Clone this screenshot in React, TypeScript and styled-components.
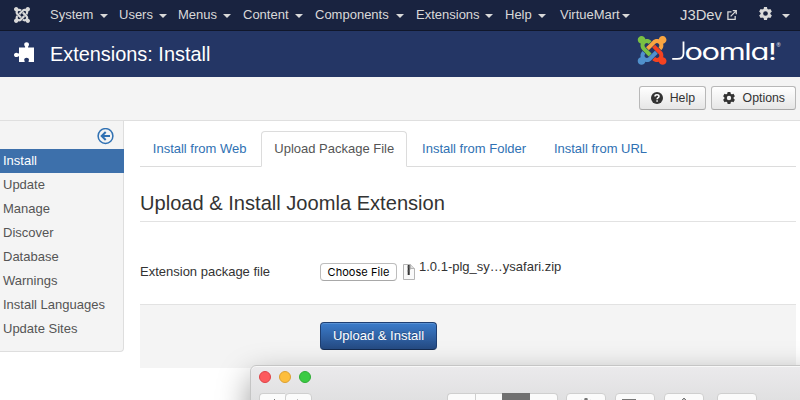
import React from "react";
import styled, { createGlobalStyle, css } from "styled-components";

const Global = createGlobalStyle`
  * { box-sizing: border-box; }
  html, body { margin: 0; width: 800px; height: 400px; overflow: hidden; background: #fff; }
  body { font: 13px/18px "Liberation Sans", Arial, sans-serif; color: #333; }
  svg { display: block; flex: none; }
`;

const Page = styled.div`
  position: relative;
  width: 800px;
  height: 400px;
  overflow: hidden;
`;

const NavBar = styled.nav`
  display: flex;
  align-items: center;
  height: 31px;
  padding: 0 10px 1px 14px;
  background: #192340;
  border-bottom: 1px solid #10172b;
  color: #d9d9d9;
`;

const NavMenu = styled.div`
  display: flex;
  margin-left: 20px;
  flex: 1;
`;

const NavItem = styled.span<{ $w: number; $textWidth: number }>`
  display: flex;
  align-items: center;
  width: ${(p) => p.$w}px;
  white-space: nowrap;
  span { width: ${(p) => p.$textWidth}px; }
`;

const Caret = styled.i`
  width: 0;
  height: 0;
  margin-top: 2px;
  border: 4px solid transparent;
  border-top-color: #d9d9d9;
  border-bottom: 0;
`;

const SiteLink = styled.span`
  display: flex;
  align-items: center;
  gap: 5px;
  margin-right: 22px;
  font-size: 14.8px;
`;

const UserMenu = styled.span`
  display: flex;
  align-items: center;
  gap: 10px;
  svg { margin-top: -3px; }
`;

const Header = styled.header`
  display: flex;
  align-items: flex-start;
  height: 46px;
  padding: 5px 18px 0 14px;
  background: #243665;
  color: #fff;
`;

const IconSlot = styled.span`
  padding-top: 6px;
`;

const PageTitle = styled.h1`
  flex: 1;
  margin: 0 0 0 16px;
  font-size: 19.9px;
  line-height: 36px;
  font-weight: 400;
`;

const Toolbar = styled.div`
  display: flex;
  justify-content: flex-end;
  gap: 5px;
  height: 44px;
  padding: 9px 4px 0;
  background: #f4f4f4;
  border-bottom: 1px solid #dfdfdf;
`;

const ToolButton = styled.button<{ $w: number }>`
  display: flex;
  align-items: center;
  justify-content: space-between;
  width: ${(p) => p.$w}px;
  height: 24px;
  padding: 0 10px 0 11px;
  border: 1px solid #b8b8b8;
  border-bottom-color: #a8a8a8;
  border-radius: 3px;
  background: linear-gradient(#fff, #e6e6e6);
  color: #333;
  font: 12.3px "Liberation Sans", Arial, sans-serif;
  svg { margin-top: -1px; }
`;

const Body = styled.div`
  display: flex;
  align-items: flex-start;
`;

const Sidebar = styled.aside`
  width: 124px;
  height: 231px;
  background: #f4f4f4;
  border: solid #dedede;
  border-width: 0 1px 1px 0;
  border-radius: 0 0 4px 0;
`;

const Collapse = styled.div`
  display: flex;
  justify-content: flex-end;
  height: 28px;
  padding: 7px 9px 0 0;
`;

const SideItem = styled.div<{ $active?: boolean }>`
  height: 24px;
  padding-left: 3px;
  line-height: 23px;
  color: #555;
  ${(p) => p.$active && css`
    margin-right: -1px;
    background: #3d70ab;
    color: #fff;
  `}
`;

const Main = styled.main`
  width: 656px;
  margin-left: 16px;
`;

const Tabs = styled.div`
  display: flex;
  height: 46px;
  padding-top: 10px;
  border-bottom: 1px solid #dcdcdc;
`;

const Tab = styled.a<{ $active?: boolean }>`
  height: 36px;
  padding: 0 12px 0 11.8px;
  margin-right: 2px;
  line-height: 34px;
  border: 1px solid transparent;
  color: #3071b3;
  white-space: nowrap;
  ${(p) => p.$active && css`
    border-color: #dcdcdc #dcdcdc #fff;
    border-radius: 4px 4px 0 0;
    background: #fff;
    color: #555;
  `}
`;

const Legend = styled.h2`
  height: 55px;
  margin: 0;
  padding-top: 18px;
  border-bottom: 1px solid #e2e2e2;
  font-size: 20.1px;
  line-height: 37px;
  font-weight: 400;
`;

const FieldRow = styled.div`
  display: flex;
  height: 82px;
  padding-top: 41px;
`;

const FieldLabel = styled.label`
  width: 180px;
  line-height: 18px;
`;

const ChooseFile = styled.button`
  width: 77px;
  height: 18px;
  padding: 0;
  border: 1px solid #bdbdbd;
  border-bottom-color: #a8a8a8;
  border-radius: 4px;
  background: #fff;
  color: #000;
  font: 11px/15px Inter, sans-serif;
  letter-spacing: 0.05px;
`;

const FileIcon = styled.svg`
  margin: 1px 4px 0 6px;
`;

const FileName = styled.span`
  margin-top: -5px;
`;

const Actions = styled.div`
  height: 64px;
  padding: 17px 0 0 180px;
  background: #f4f4f4;
  border-top: 1px solid #e2e2e2;
`;

const Primary = styled.button`
  display: block;
  width: 117px;
  height: 28px;
  padding: 0;
  border: 1px solid #1e3f72;
  border-bottom-color: #142b50;
  border-radius: 4px;
  background: linear-gradient(#3b7ccb, #254a82);
  box-shadow: inset 0 1px 0 #5890d2;
  color: #fff;
  font: 13px/26px "Liberation Sans", Arial, sans-serif;
  text-shadow: 0 -1px 0 #0004;
`;

const FinderWindow = styled.section`
  position: absolute;
  left: 250px;
  top: 365px;
  width: 640px;
  height: 160px;
  border: 1px solid #c5c5c5;
  border-radius: 6px 0 0 0;
  background: linear-gradient(#ebeaec, #dfdfe0 38px);
  box-shadow: inset 0 1px 0 #f8f8f8, 0 12px 32px #0006;
`;

const Lights = styled.div`
  display: flex;
  gap: 8px;
  padding: 5px 0 0 8px;
`;

const Light = styled.i<{ $fill: string; $edge: string }>`
  width: 12px;
  height: 12px;
  border: 1px solid ${(p) => p.$edge};
  border-radius: 50%;
  background: ${(p) => p.$fill};
`;

const FinderTools = styled.div`
  display: flex;
  padding: 10px 0 0 8px;
`;

const Segment = styled.div<{ $w: number; $gap?: number; $dark?: boolean; $shape?: "first" | "mid" | "last" }>`
  display: flex;
  justify-content: center;
  width: ${(p) => p.$w}px;
  height: 22px;
  margin-right: ${(p) => p.$gap ?? 0}px;
  padding-top: 4px;
  border: 1px solid #cfcfcf;
  border-radius: 4px;
  background: #fbfbfb;
  ${(p) => p.$shape === "first" && css`border-radius: 4px 0 0 4px; border-right-width: 0;`}
  ${(p) => p.$shape === "mid" && css`border-radius: 0; border-right-width: 0;`}
  ${(p) => p.$shape === "last" && css`border-radius: 0 4px 4px 0; border-left: 0;`}
  ${(p) => p.$dark && css`background: #707070; border-color: #707070;`}
`;

const Wordmark = styled.text`
  fill: #fff;
  font-family: Inter, sans-serif;
  font-size: 22.5px;
  font-weight: 400;
  letter-spacing: -1px;
  font-feature-settings: "cv11" 1;
`;

const strands = [
  { color: "#7ac143", d: "M.6 92.1C.6 58.8 27.4 32 60.4 32c30 0 54.5 21.9 59.2 50.2 32.6-7.6 67.1.6 96.5 30l-44.3 44.3c-20.5-20.5-42.6-16.3-55.4-3.5-14.3 14.3-14.3 37.9 0 52.2l99.5 99.5-44 44.3c-87.7-87.2-49.7-49.7-99.8-99.7-26.8-26.5-35-64.8-24.8-98.9C20.4 144.6.6 120.7.6 92.1z" },
  { color: "#f9a541", d: "M130.1 208.5l44.3 44.3c10-10 89.7-89.7 99.7-99.8 14.3-14.3 37.6-14.3 51.9 0 12.8 12.8 17 35-3.5 55.4l44 44.3c31.2-31.2 38.5-67.6 28.9-101.2 29.2-4.1 51.9-29.2 51.9-59.5 0-33.2-26.8-60.1-59.8-60.1-30.3 0-55.4 22.5-59.5 51.6-33.8-9.9-71.7-1.5-98.3 25.1-18.3 19.1-71.1 71.5-99.6 99.9z" },
  { color: "#f44321", d: "M396.4 360.7c8.2-32.7-.9-68.5-26.3-93.9-11.8-12.2 5 4.7-99.5-99.7l-44.3 44.3 99.7 99.7c14.3 14.3 14.3 37.6 0 51.9-12.8 12.8-35 17-55.4-3.5l-44 44.3c27.6 30.2 68 38.8 102.7 28 5.5 27.4 29.7 48.1 58.9 48.1 33 0 59.8-26.8 59.8-60.1 0-30.2-22.5-55-51.6-59.1z" },
  { color: "#5091cd", d: "M312.1 307.6l-44-44.3c-87 86.4-50.4 50.4-99.7 99.8-14.3 14.3-37.6 14.3-51.9 0-13.1-13.4-16.9-35.3 3.2-55.4l-44-44.3c-30.2 30.2-38 65.2-29.5 98.3-26.7 6-46.2 29.9-46.2 58.2C0 453.2 26.8 480 59.8 480c28.6 0 52.5-19.8 58.6-46.7 32.7 8.2 68.5-.6 94.2-26 32.1-32 12.2-12.4 99.5-99.7z" },
];

const Strands = ({ mono }: { mono?: string }) => (
  <>{strands.map((s) => <path key={s.color} d={s.d} fill={mono ?? s.color} />)}</>
);

const JoomlaMark = () => (
  <svg width="16" height="16" viewBox="0 32 448 448"><Strands mono="#d9d9d9" /></svg>
);

const Gear = ({ size, color }: { size: number; color: string }) => (
  <svg width={size} height={size} viewBox="0 0 14 14">
    <g fill={color}>
      {[0, 60, 120].map((a) => (
        <path key={a} d="M5.4 0h3.200l.6 3H4.800zM5.400 14h3.200l.6-3H4.800z" transform={`rotate(${a} 7 7)`} />
      ))}
    </g>
    <circle cx="7" cy="7" r="3.900" fill="none" stroke={color} strokeWidth="2.700" />
  </svg>
);

const Puzzle = () => (
  <svg width="20" height="21" viewBox="0 0 20 21" fill="#fff">
    <path d="M5 5.500h5.700c.5 0 .6-.5.3-1-.5-.6-.8-1.200-.8-2C10.200 1.100 11.200.3 12.600.3S15 1.100 15 2.500c0 .8-.3 1.400-.8 2-.3.500-.2 1 .3 1H20V20h-5c-.6 0-.7-.4-.4-.9.300-.5.4-.9.4-1.300 0-1.300-1.100-2.100-2.400-2.100s-2.400.8-2.400 2.100c0 .4.1.8.4 1.300.300.500.2.9-.4.9H5v-5.200c0-.5-.4-.6-.9-.3-.6.400-1.100.6-1.700.6C.900 15.100 0 14.200 0 13s.9-2.200 2.400-2.200c.6 0 1.100.2 1.700.6.500.300.9.200.9-.3z" />
  </svg>
);

const JoomlaLogo = () => (
  <svg width="145" height="36" viewBox="0 0 145 36">
    <g transform="translate(0.700 0) scale(.0643)"><g transform="translate(0 -32)"><Strands /></g></g>
    <path d="M46.500 5.500V17.500c0 4-2.100 5.400-6.300 5.400h-5" fill="none" stroke="#fff" strokeWidth="1.800" />
    <Wordmark transform="translate(47.500 23.700) scale(1.420 1)" textLength="64" lengthAdjust="spacingAndGlyphs">oomla!</Wordmark>
    <text x="139.500" y="10.500" fill="#fff" fontFamily="Liberation Sans, sans-serif" fontSize="5.500">®</text>
  </svg>
);

const menu: [string, number, number][] = [
  ["System", 69, 49.5], ["Users", 59, 40], ["Menus", 65, 45], ["Content", 72, 52],
  ["Components", 101, 81], ["Extensions", 89, 69], ["Help", 55, 33], ["VirtueMart", 80, 62],
];
const side = ["Install", "Update", "Manage", "Discover", "Database", "Warnings", "Install Languages", "Update Sites"];
const tabs = ["Install from Web", "Upload Package File", "Install from Folder", "Install from URL"];

export default function App() {
  return (
    <Page>
      <Global />
      <NavBar>
        <JoomlaMark />
        <NavMenu>
          {menu.map(([t, w, tw]) => (
            <NavItem key={t} $w={w} $textWidth={tw}><span>{t}</span><Caret /></NavItem>
          ))}
        </NavMenu>
        <SiteLink>
          J3Dev
          <svg width="10" height="10" viewBox="0 0 11 11" fill="none" stroke="#d9d9d9" strokeWidth="1.400">
            <path d="M5 2H1v8.200h8V6.500M4 7l5.500-5.500M6.300.8H10.200V4.700" />
          </svg>
        </SiteLink>
        <UserMenu><Gear size={13} color="#d9d9d9" /><Caret /></UserMenu>
      </NavBar>
      <Header>
        <IconSlot><Puzzle /></IconSlot>
        <PageTitle>Extensions: Install</PageTitle>
        <JoomlaLogo />
      </Header>
      <Toolbar>
        <ToolButton $w={67}>
          <svg width="12" height="12" viewBox="0 0 12 12">
            <circle cx="6" cy="6" r="6" fill="#333" />
            <path d="M4 4.500C4 2.300 8 2.300 8 4.500 8 5.800 6.100 5.600 6.100 7.200M6.100 8.200v1.500" fill="none" stroke="#fff" strokeWidth="1.500" />
          </svg>
          Help
        </ToolButton>
        <ToolButton $w={85}><Gear size={12} color="#333" />Options</ToolButton>
      </Toolbar>
      <Body>
        <Sidebar>
          <Collapse>
            <svg width="17" height="17" viewBox="0 0 17 17" fill="none" stroke="#3071b3">
              <circle cx="8.500" cy="8" r="7.400" strokeWidth="1.500" />
              <path d="M13 8H5M8.700 4l-4 4 4 4" strokeWidth="2" />
            </svg>
          </Collapse>
          {side.map((t, i) => <SideItem key={t} $active={i === 0}>{t}</SideItem>)}
        </Sidebar>
        <Main>
          <Tabs>{tabs.map((t, i) => <Tab key={t} $active={i === 1}>{t}</Tab>)}</Tabs>
          <Legend>Upload &amp; Install Joomla Extension</Legend>
          <FieldRow>
            <FieldLabel>Extension package file</FieldLabel>
            <ChooseFile>Choose File</ChooseFile>
            <FileIcon width="12" height="17" viewBox="0 0 12 17">
              <path d="M.5.5h7l4 4v11H.5z" fill="#fafafa" stroke="#b5b5b5" />
              <path d="M7.500.5v4h4" fill="#ddd" stroke="#b5b5b5" />
              <path d="M5.700 1v10" stroke="#333" strokeWidth="2" />
              <path d="M4.500 3h1M6 5h1.500M4.500 7h1" stroke="#777" />
            </FileIcon>
            <FileName>1.0.1-plg_sy…ysafari.zip</FileName>
          </FieldRow>
          <Actions><Primary>Upload &amp; Install</Primary></Actions>
        </Main>
      </Body>
      <FinderWindow>
        <Lights>
          <Light $fill="#fc5b5e" $edge="#de4348" />
          <Light $fill="#fdbe3c" $edge="#dca032" />
          <Light $fill="#3bcb43" $edge="#2fac35" />
        </Lights>
        <FinderTools>
          <Segment $w={26} $shape="first"><svg width="6" height="10" viewBox="0 0 6 10"><path d="M5 1L1 5l4 4" fill="none" stroke="#777" /></svg></Segment>
          <Segment $w={27} $gap={135}><svg width="6" height="10" viewBox="0 0 6 10"><path d="M1 1l4 4-4 4" fill="none" stroke="#bbb" /></svg></Segment>
          <Segment $w={28} $shape="first" />
          <Segment $w={27} $shape="mid" />
          <Segment $w={28} $shape="mid" $dark />
          <Segment $w={28} $gap={8} $shape="last" />
          <Segment $w={40} $gap={9}><Gear size={12} color="#777" /></Segment>
          <Segment $w={40} $gap={9}><svg width="26" height="10" viewBox="0 0 26 10"><path d="M0 2h14M0 6h14" stroke="#777" strokeWidth="2" /></svg></Segment>
          <Segment $w={40} $gap={13}><svg width="10" height="12" viewBox="0 0 10 12"><path d="M5 0v8M2 3l3-3 3 3M0 5v6h10V5" fill="none" stroke="#777" /></svg></Segment>
          <Segment $w={40} />
        </FinderTools>
      </FinderWindow>
    </Page>
  );
}
